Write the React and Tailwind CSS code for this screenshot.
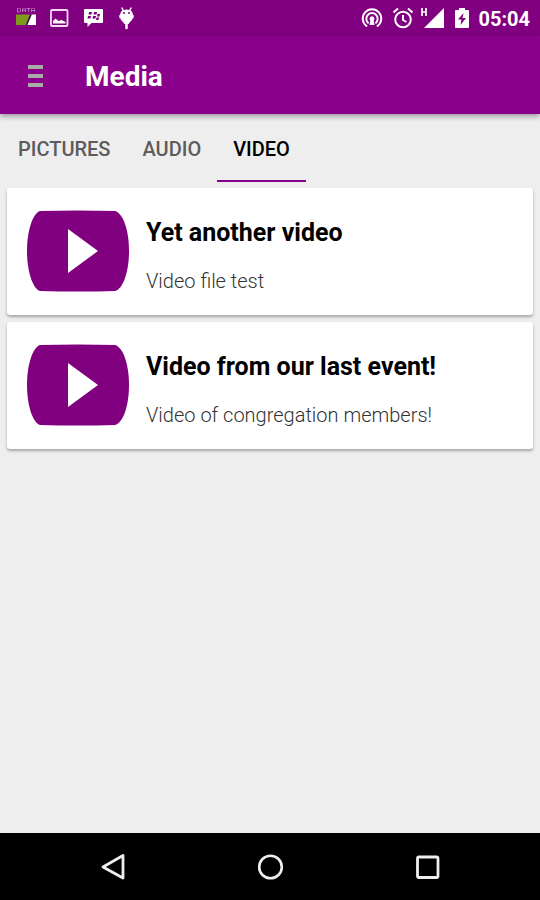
import React from "react";

const videos = [
  { title: "Yet another video", description: "Video file test" },
  { title: "Video from our last event!", description: "Video of congregation members!" },
];

const tabs = ["Pictures", "Audio", "Video"];

function DataIcon() {
  return (
    <svg className="h-5 w-5" viewBox="0 0 20 20" fill="none">
      <g stroke="#b673b6" strokeWidth="1">
        <path d="M1.500 0v4h2l1-1V1l-1-1zM6.500 4V1l1-1h1l1 1v3M6.500 2.500h3M10.500 .5h4M12.500 .5V4M15.500 4V1l1-1h1l1 1v3M15.500 2.500h3" />
      </g>
      <path d="M0 6.500h14L10 17H0z" fill="#7f9a1b" />
      <path d="M15.500 6.500H20V17h-9z" fill="#fff" />
      <path d="M15 6.500L10.500 17" stroke="#35104a" strokeWidth="1.500" />
    </svg>
  );
}

function PictureIcon() {
  return (
    <svg className="h-5 w-5" viewBox="0 0 20 20" fill="none">
      <rect x="1" y="2" width="16.500" height="16" rx="1" stroke="#f3dcf3" strokeWidth="1.800" />
      <path d="M3 15.500V13l2.500-2.500 3 2.500 3-1 4 2v1.500z" fill="#fff" />
    </svg>
  );
}

function MessengerIcon() {
  return (
    <svg className="h-5 w-5" viewBox="0 0 20 20">
      <path d="M1 1h17q1 0 1 1v12q0 1-1 1H7.500L3.500 19v-4H1q-1 0-1-1V2q0-1 1-1z" fill="#fff" />
      <g fill="#800080">
        <path d="M5 4h3l-.5 2.500h-3zM10 4h3l-.5 2.500h-3zM4 8h3l-.5 2.500h-3zM9 8h3l-.5 2.500h-3zM13.500 6H16l-.5 2.500H13zM12.500 9.500H15l-.5 2.500H12z" />
      </g>
    </svg>
  );
}

function DroidIcon() {
  return (
    <svg className="h-6 w-4" viewBox="0 0 16 24" fill="none">
      <path d="M4 2l1.500 3M13 2l-1.500 3" stroke="#fff" strokeWidth="1.500" strokeLinecap="round" />
      <path d="M2 9.500v2M15 9.500v2" stroke="#fff" strokeWidth="1.500" strokeLinecap="round" />
      <path d="M2 9.500q0-6 6.500-6t6.500 6q0 4.500-3 6.500l-1.500 2h-4L5 16Q2 14 2 9.500z" fill="#fff" />
      <path d="M8.500 17v5" stroke="#fff" strokeWidth="2.500" strokeLinecap="round" />
      <circle cx="6" cy="7" r="1" fill="#800080" />
      <circle cx="11" cy="7" r="1" fill="#800080" />
    </svg>
  );
}

function HotspotIcon() {
  return (
    <svg className="h-[22px] w-[22px]" viewBox="0 0 22 22" fill="none" stroke="#fff" strokeWidth="1.900" strokeLinecap="round">
      <path d="M5.500 19a9.300 9.300 0 1 1 11 0" />
      <path d="M7 15.800a5.700 5.700 0 1 1 8 0" />
      <path d="M9.300 13.500a2.400 2.400 0 1 1 3.400 0L13.500 18h-5z" fill="#fff" stroke="none" />
    </svg>
  );
}

function AlarmIcon() {
  return (
    <svg className="h-[22px] w-[22px]" viewBox="0 0 22 22" fill="none" stroke="#fff" strokeWidth="2">
      <circle cx="11" cy="12.500" r="7.800" />
      <path d="M1.500 5.500l4.500-4M20.500 5.500l-4.500-4M11 8v5l3.500 2" />
    </svg>
  );
}

function SignalIcon() {
  return (
    <svg className="h-6 w-6" viewBox="0 0 24 24">
      <path d="M24 2v20H4z" fill="#fff" />
      <path d="M2 2v8M6 2v8M2 6h4" stroke="#fff" strokeWidth="1.700" />
    </svg>
  );
}

function BatteryIcon() {
  return (
    <svg className="h-[22px] w-4" viewBox="0 0 16 22">
      <path d="M5 1h6v2h3q1 0 1 1v16q0 1-1 1H2q-1 0-1-1V4q0-1 1-1h3z" fill="#fff" />
      <path d="M9.500 6L4 12.500h3.500L6.500 18l5.500-7H8.500z" fill="#800080" />
    </svg>
  );
}

function StatusBar() {
  return (
    <div className="flex h-9 items-center justify-between bg-[#800080] pr-2.5 pl-4 text-white">
      <div className="flex items-center gap-3.5">
        <DataIcon />
        <PictureIcon />
        <MessengerIcon />
        <DroidIcon />
      </div>
      <div className="flex items-center">
        <HotspotIcon />
        <span className="w-[9px]" />
        <AlarmIcon />
        <span className="w-1.5" />
        <SignalIcon />
        <span className="w-2.5" />
        <BatteryIcon />
        <time className="ml-2 pt-0.5 text-xl font-bold">05:04</time>
      </div>
    </div>
  );
}

function AppBar() {
  return (
    <header className="z-10 flex h-[78px] items-center gap-[42px] bg-[#8b008b] pl-7 shadow-[0_2px_6px_rgba(0,0,0,0.4)]">
      <button type="button" aria-label="Open menu" className="flex w-[15px] flex-col gap-[5px] pt-0.5">
        <span className="h-1 bg-[#aaa]" />
        <span className="h-1 bg-[#aaa]" />
        <span className="h-1 bg-[#aaa]" />
      </button>
      <h1 className="pt-1 text-[28px] font-bold text-white">Media</h1>
    </header>
  );
}

function Tabs({ active, onSelect }) {
  return (
    <nav className="flex h-[68px] pl-0.5">
      {tabs.map((tab) => (
        <button
          key={tab}
          type="button"
          aria-pressed={tab === active}
          onClick={() => onSelect(tab)}
          className={
            "border-b-2 px-4 pt-1 text-xl font-medium uppercase " +
            (tab === active ? "border-[#8b008b] text-black" : "border-transparent text-[#5c5c5c]")
          }
        >
          {tab}
        </button>
      ))}
    </nav>
  );
}

function VideoCard({ title, description }) {
  return (
    <article className="flex h-[127px] items-center gap-4 rounded-[3px] bg-white px-[19px] shadow-[0_2px_3px_rgba(0,0,0,0.3)]">
      <svg className="h-[84px] w-[104px] shrink-0" viewBox="0 0 104 84" role="img" aria-label="Play">
        <path d="M14 1Q52 0 89 1C97 3 103 20 103 41 103 62 97 79 89 81Q52 82 14 81C7 79 1 62 1 41 1 20 7 3 14 1z" fill="#800080" />
        <path d="M42 19v44l30-22z" fill="#fff" />
      </svg>
      <div className="flex min-w-0 flex-col gap-4 pt-2.5">
        <h2 className="text-[25px] leading-8 font-bold text-black">{title}</h2>
        <p className="text-xl leading-8 font-light text-[#333]">{description}</p>
      </div>
    </article>
  );
}

function NavigationBar() {
  return (
    <footer className="flex h-[67px] items-center justify-center gap-[127px] bg-black">
      <button type="button" aria-label="Back">
        <svg className="h-[30px] w-[30px]" viewBox="0 0 30 30" fill="none" stroke="#eee" strokeWidth="2.800" strokeLinejoin="round">
          <path d="M25 3.500v22.500L5 15z" />
        </svg>
      </button>
      <button type="button" aria-label="Home">
        <svg className="h-[30px] w-[30px]" viewBox="0 0 30 30" fill="none" stroke="#eee" strokeWidth="2.600">
          <circle cx="15.500" cy="15" r="11.300" />
        </svg>
      </button>
      <button type="button" aria-label="Recent apps">
        <svg className="h-[30px] w-[30px]" viewBox="0 0 30 30" fill="none" stroke="#eee" strokeWidth="2.800">
          <rect x="5.500" y="5" width="20.500" height="20.500" rx="1.500" />
        </svg>
      </button>
    </footer>
  );
}

export default function App() {
  const [active, setActive] = React.useState("Video");
  return (
    <div className="flex min-h-screen flex-col bg-[#eee] font-[Roboto,sans-serif]">
      <StatusBar />
      <AppBar />
      <Tabs active={active} onSelect={setActive} />
      <main className="flex flex-1 flex-col gap-[7px] px-[7px] pt-1.5">
        {active === "Video" && videos.map((video) => <VideoCard key={video.title} {...video} />)}
      </main>
      <NavigationBar />
    </div>
  );
}
